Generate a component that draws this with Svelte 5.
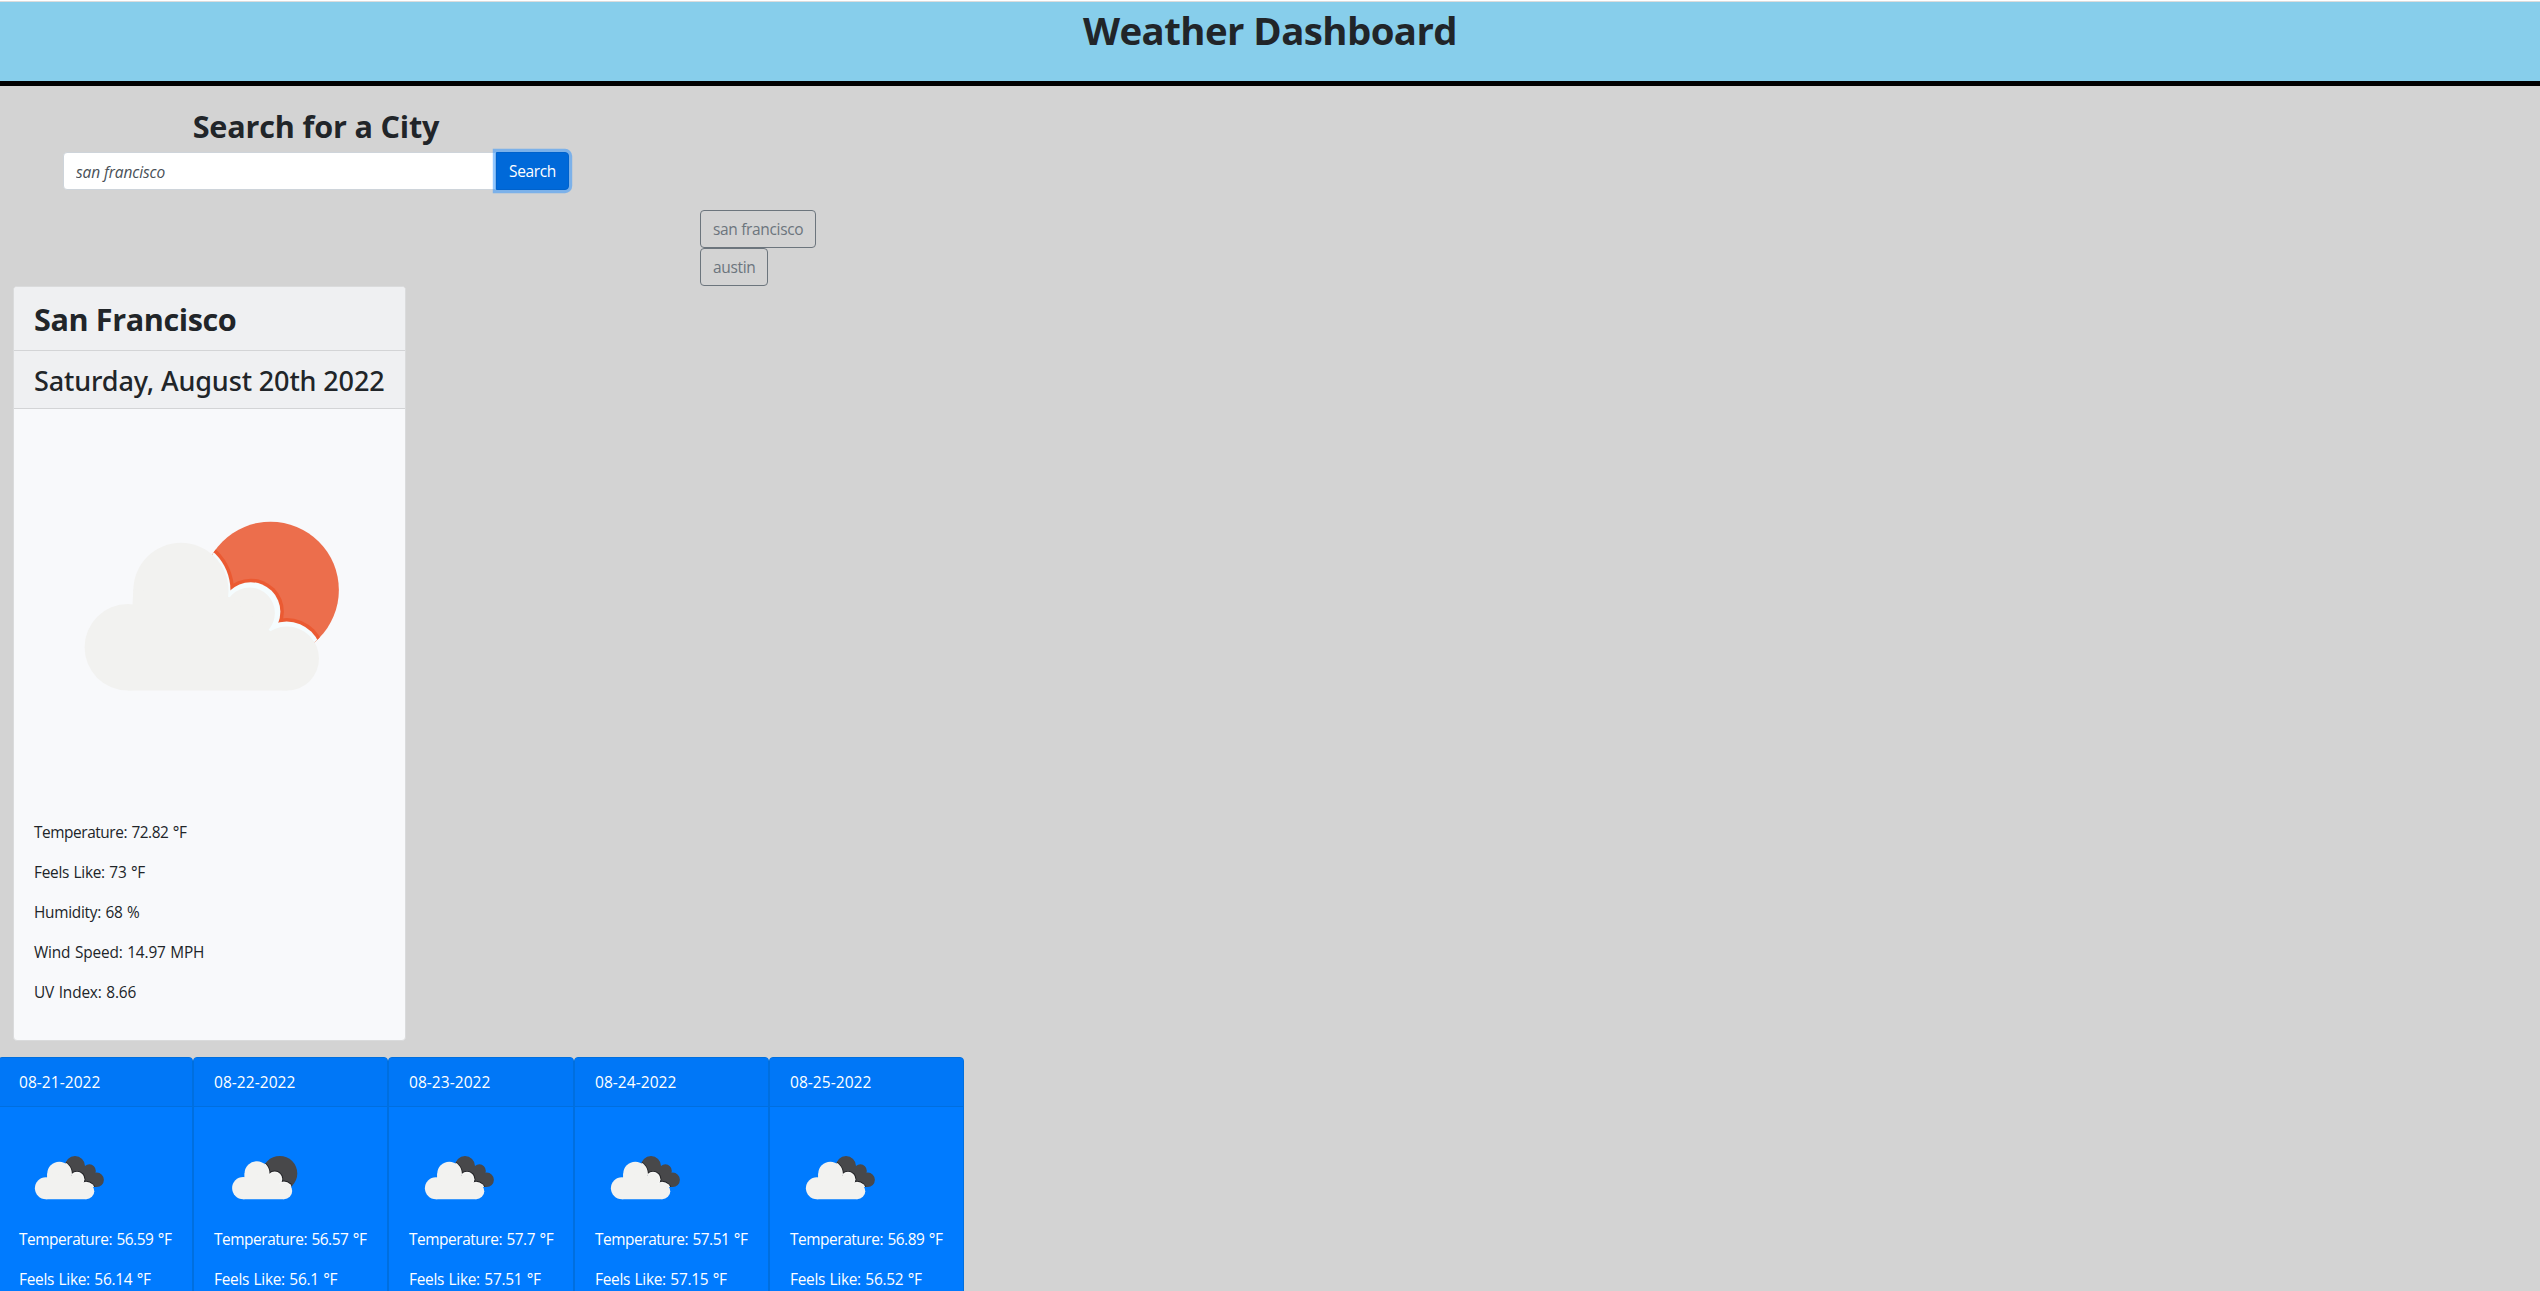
<script>
  const history = ['san francisco', 'austin'];
  const current = {
    city: 'San Francisco',
    date: 'Saturday, August 20th 2022',
    temp: '72.82', feels: '73', humidity: '68', wind: '14.97', uv: '8.66'
  };
  const forecast = [
    { date: '08-21-2022', icon: 'broken', temp: '56.59', feels: '56.14', width: 195 },
    { date: '08-22-2022', icon: 'few', temp: '56.57', feels: '56.1', width: 195 },
    { date: '08-23-2022', icon: 'broken', temp: '57.7', feels: '57.51', width: 186 },
    { date: '08-24-2022', icon: 'broken', temp: '57.51', feels: '57.15', width: 195 },
    { date: '08-25-2022', icon: 'broken', temp: '56.89', feels: '56.52', width: 195 }
  ];
</script>

<!-- Front cloud plus whatever sits behind it; the rim is drawn only where the two overlap -->
{#snippet weatherIcon(kind, id, fill, rim, gap)}
  <svg class="icon" viewBox="0 0 100 100" aria-hidden="true">
    <defs>
      <clipPath id={id}>
        {#if kind === 'few'}
          <circle cx="65.8" cy="46.4" r="17.5" />
        {:else}
          <circle cx="56" cy="39" r="10" />
          <circle cx="70.4" cy="43.7" r="6.4" />
          <circle cx="77.7" cy="52.8" r="7.2" />
          <path d="M50.4 38H64.4L76.4 48L77.4 60H55.4Z" />
        {/if}
      </clipPath>
    </defs>
    <g clip-path="url(#{id})">
      <rect width="100" height="100" fill={fill} />
      <g transform={kind === 'few' ? 'translate(.2 0)' : 'translate(-1.8 .9) scale(.988)'}>
        <g fill={rim}>
          <circle cx="42" cy="46.5" r="14.2" />
          <circle cx="60.5" cy="52" r="8.5" />
          <circle cx="69.7" cy="63.5" r="9.9" />
        </g>
        <g fill={gap}>
          <circle cx="42" cy="46.5" r="13.3" />
          <circle cx="60.5" cy="52" r="7.6" />
          <circle cx="69.7" cy="63.5" r="9" />
        </g>
      </g>
    </g>
    <g fill="#f2f2f0" transform={kind === 'few' ? 'translate(.2 0)' : 'translate(-1.8 .9) scale(.988)'}>
      <circle cx="42.6" cy="46.5" r="12.2" />
      <circle cx="60.2" cy="52.3" r="6.5" />
      <circle cx="29" cy="61.1" r="11.1" />
      <circle cx="69.8" cy="64" r="8.2" />
      <path d="M30.4 46.2L55 48.2L67 58.2L69.9 72.2H29Z" />
    </g>
  </svg>
{/snippet}

<header><h1>Weather Dashboard</h1></header>

<main>
  <section class="search">
    <h2 class="search-title">Search for a City</h2>
    <div class="group">
      <input type="text" placeholder="san francisco" />
      <button class="go" type="button">Search</button>
    </div>
  </section>

  <div class="history">
    {#each history as city}
      <button type="button">{city}</button>
    {/each}
  </div>

  <section class="today">
    <h2 class="city">{current.city}</h2>
    <h3>{current.date}</h3>
    {@render weatherIcon('few', 'today-sun', '#ec6e4c', '#eb5a32', '#f5fcfe')}
    <div class="stats">
      <p class="tight">Temperature: {current.temp} °F</p>
      <p>Feels Like: {current.feels} °F</p>
      <p>Humidity: {current.humidity} %</p>
      <p class="wide">Wind Speed: {current.wind} MPH</p>
      <p class="wide">UV Index: {current.uv}</p>
    </div>
  </section>

  <section class="days">
    {#each forecast as day, i}
      <article style:width="{day.width}px">
        <div class="day-head">{day.date}</div>
        <div class="day-body">
          {@render weatherIcon(day.icon, `day-${i}`, '#48484a', '#222326', '#f6f6f5')}
          <p class="tight">Temperature: {day.temp} °F</p>
          <p>Feels Like: {day.feels} °F</p>
        </div>
      </article>
    {/each}
  </section>
</main>

<style>
  :global(body) {
    background: #d3d3d3;
    overflow: hidden;
  }
  :global(#app) {
    height: 1291px;
    overflow: hidden;
    font: 15.5px/24px "Open Sans", "Noto Sans", sans-serif;
    color: #212529;
  }
  h1, h2, h3, p { margin: 0; }
  header, main, header *, main * { box-sizing: border-box; }

  header {
    height: 86px;
    padding-top: 4px;
    background: #87ceeb;
    border-bottom: 5px solid #000;
    box-shadow: inset 0 1px #fff, inset 0 2px #dcdcdc;
    text-align: center;
  }
  h1 {
    font-size: 38.4px;
    line-height: 52px;
    font-weight: 700;
    letter-spacing: -0.58px;
  }

  .search {
    width: 506px;
    margin-left: 63px;
    padding-top: 21px;
  }
  .search-title {
    height: 45px;
    font-size: 30.6px;
    line-height: 38px;
    letter-spacing: -0.18px;
    text-align: center;
  }
  .group { display: flex; }
  input {
    flex: 1;
    min-width: 0;
    height: 38px;
    padding: 1px 12px 0;
    border: 1px solid #ced4da;
    border-radius: 4px 0 0 4px;
    background: #fff;
    font: inherit;
    letter-spacing: -0.1px;
  }
  input::placeholder {
    color: #495057;
    font-style: italic;
    opacity: 1;
  }
  .go {
    position: relative;
    width: 73px;
    height: 38px;
    padding: 0;
    border: 1px solid #0062cc;
    border-radius: 0 4px 4px 0;
    background: #0069d9;
    box-shadow: 0 0 0 3.2px rgba(38, 143, 255, 0.5);
    color: #fff;
    font: inherit;
    letter-spacing: -0.36px;
  }

  .history {
    display: flex;
    flex-direction: column;
    align-items: flex-start;
    margin: 20px 0 0 700px;
  }
  .history button {
    height: 38px;
    padding: 0 12px 1px;
    border: 1px solid #6c757d;
    border-radius: 4px;
    background: transparent;
    color: #6c757d;
    font: inherit;
    letter-spacing: -0.34px;
  }

  .today {
    width: 393px;
    height: 755px;
    margin-left: 13px;
    border: 1px solid #dadbdc;
    border-radius: 4px;
    background: #f8f9fb;
    overflow: hidden;
  }
  .city, h3 {
    padding-left: 20px;
    background: #eff0f2;
    border-bottom: 1px solid #d3d4d6;
  }
  .city {
    height: 64px;
    font-size: 30.6px;
    line-height: 65px;
    letter-spacing: -0.4px;
  }
  h3 {
    height: 58px;
    font: 500 27px/60px "Noto Sans", "Open Sans", sans-serif;
    letter-spacing: -0.13px;
    white-space: nowrap;
  }
  .icon { display: block; }
  .today .icon { width: 390px; height: 390px; }
  .stats {
    display: flex;
    flex-direction: column;
    gap: 16px;
    padding: 22px 20px 20px;
  }
  p {
    white-space: nowrap;
    font-size: 15.4px;
    letter-spacing: -0.28px;
    word-spacing: 0.8px;
  }
  .tight { letter-spacing: -0.43px; }
  .wide { letter-spacing: -0.16px; }

  .days {
    display: flex;
    height: 420px;
    margin: 16px 0 0 -2px;
    color: #fff;
  }
  article {
    flex: none;
    border: 1px solid #006fdf;
    border-radius: 4px;
    background: #007bff;
    overflow: hidden;
  }
  .day-head {
    height: 49px;
    padding: 12px 20px;
    background: #0077f7;
    border-bottom: 1px solid #006fdf;
    letter-spacing: 0.05px;
  }
  .day-body {
    display: flex;
    flex-direction: column;
    gap: 16px;
    padding: 20px;
  }
  .day-body .icon {
    width: 100px;
    height: 100px;
    margin-bottom: -15px;
  }
</style>
